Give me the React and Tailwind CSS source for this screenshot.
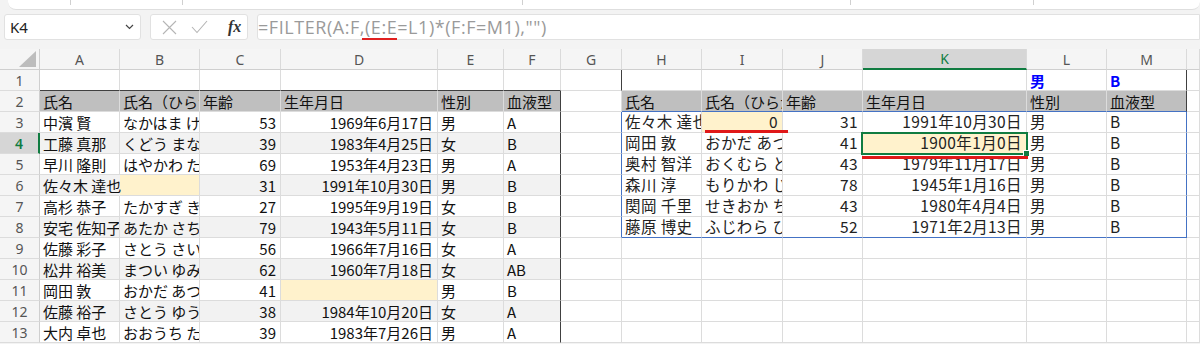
import React from 'react';

const LETTERS = ['A', 'B', 'C', 'D', 'E', 'F', 'G', 'H', 'I', 'J', 'K', 'L', 'M', ''];

const GRID = 'grid grid-cols-[40px_80px_80px_81px_157px_66px_57px_61px_80px_81px_80px_164px_80px_80px_13px]';

const JP = "font-['Noto_Sans_CJK_JP','Noto_Sans',sans-serif]";

// left table: A..F
const left = [
  ['中濱 賢', 'なかはま けん', '53', '1969年6月17日', '男', 'A'],
  ['工藤 真那', 'くどう まな', '39', '1983年4月25日', '女', 'B'],
  ['早川 隆則', 'はやかわ たかのり', '69', '1953年4月23日', '男', 'A'],
  ['佐々木 達也', '', '31', '1991年10月30日', '男', 'B'],
  ['高杉 恭子', 'たかすぎ きょうこ', '27', '1995年9月19日', '女', 'B'],
  ['安宅 佐知子', 'あたか さちこ', '79', '1943年5月11日', '女', 'B'],
  ['佐藤 彩子', 'さとう さいこ', '56', '1966年7月16日', '女', 'A'],
  ['松井 裕美', 'まつい ゆみ', '62', '1960年7月18日', '女', 'AB'],
  ['岡田 敦', 'おかだ あつし', '41', '', '男', 'B'],
  ['佐藤 裕子', 'さとう ゆうこ', '38', '1984年10月20日', '女', 'A'],
  ['大内 卓也', 'おおうち たくや', '39', '1983年7月26日', '男', 'A'],
];

// right table: H..M (filter result)
const right = [
  ['佐々木 達也', '0', '31', '1991年10月30日', '男', 'B'],
  ['岡田 敦', 'おかだ あつし', '41', '1900年1月0日', '男', 'B'],
  ['奥村 智洋', 'おくむら ともひろ', '43', '1979年11月17日', '男', 'B'],
  ['森川 淳', 'もりかわ じゅん', '78', '1945年1月16日', '男', 'B'],
  ['関岡 千里', 'せきおか ちさと', '43', '1980年4月4日', '男', 'B'],
  ['藤原 博史', 'ふじわら ひろし', '52', '1971年2月13日', '男', 'B'],
];

const heads = ['氏名', '氏名（ひらがな）', '年齢', '生年月日', '性別', '血液型'];

function buildRow(r) {
  // returns 14 cell specs for columns A..N
  const cells = Array.from({ length: 14 }, () => ({ t: '', align: 'l', bg: 'bg-white', br: 'border-r-[#dcdcdc]', bb: 'border-b-[#dcdcdc]' }));

  if (r === 1) {
    for (let c = 0; c < 6; c++) cells[c].bb = 'border-b-[#404040]';
    cells[6].br = 'border-r-[#404040]';
    cells[12].br = 'border-r-[#404040]';
    cells[11].t = '男';
    cells[11].blue = true;
    cells[12].t = 'B';
    cells[12].blue = true;
  }

  if (r === 2) {
    heads.forEach((h, i) => {
      cells[i].t = h;
      cells[i].bg = 'bg-[#bfbfbf]';
      cells[i + 7].t = h;
      cells[i + 7].bg = 'bg-[#bfbfbf]';
      cells[i + 7].bb = 'border-b-[#4472c4]';
    });
    cells[5].br = 'border-r-[#404040]';
    cells[12].br = 'border-r-[#404040]';
  }

  if (r >= 3) {
    const row = left[r - 3];
    const band = r % 2 === 0 ? 'bg-[#f2f2f2]' : 'bg-white';
    row.forEach((v, i) => {
      cells[i].t = v;
      cells[i].bg = band;
      cells[i].align = i === 2 || i === 3 ? 'r' : 'l';
    });
    cells[5].br = 'border-r-[#404040]';
  }

  if (r === 6) {
    cells[0].spill = true;
    cells[0].br = 'border-r-transparent';
    cells[1].bg = 'bg-[#fff2cc]';
  }
  if (r === 11) cells[3].bg = 'bg-[#fff2cc]';

  if (r >= 3 && r <= 8) {
    const row = right[r - 3];
    row.forEach((v, i) => {
      cells[i + 7].t = v;
      cells[i + 7].align = i === 2 || i === 3 ? 'r' : 'l';
      cells[i + 7].thin = true;
    });
    cells[6].br = 'border-r-[#4472c4]';
    cells[12].br = 'border-r-[#4472c4]';
    if (r === 8) for (let c = 7; c < 13; c++) cells[c].bb = 'border-b-[#4472c4]';
  }
  if (r === 3) {
    cells[8].align = 'r';
    cells[8].bg = 'bg-[#fff2cc]';
  }
  if (r === 4) cells[10].bg = 'bg-[#fff2cc]';

  return cells;
}

function Cell({ cell }) {
  return (
    <div
      className={`h-[21px] border-r border-b ${cell.br} ${cell.bb} ${cell.bg} flex items-center whitespace-nowrap px-[4px] ${
        cell.spill ? 'overflow-visible' : 'overflow-hidden'
      } ${cell.align === 'r' ? 'justify-end' : 'justify-start pl-[3px]'}`}
    >
      <span
        className={`${cell.spill ? 'relative z-10' : ''} ${
          cell.blue ? 'text-[#0000ff] font-bold' : 'text-[#111]'
        } ${cell.thin ? 'text-[15.5px] tracking-[0.4px] text-[#222]' : 'text-[15px]'} leading-none`}
      >
        {cell.t}
      </span>
    </div>
  );
}

function RowHeader({ n }) {
  const selected = n === 4;
  return (
    <div
      className={`h-[21px] border-b border-b-[#dcdcdc] flex items-center justify-center text-[14px] font-['Noto_Sans',sans-serif] ${
        selected
          ? 'bg-[#d6d6d6] text-[#107c41] font-semibold border-r-2 border-r-[#107c41]'
          : 'bg-[#f5f5f5] text-[#555] border-r border-r-[#cfcfcf]'
      }`}
    >
      {n}
    </div>
  );
}

function FormulaBar() {
  return (
    <div className="flex h-[26px] mt-[4px] gap-[9px] pl-[4px]">
      <div className="w-[137px] bg-white border border-[#e1e1e1] rounded-[3px] flex items-center justify-between pl-[5px] pr-[6px]">
        <span className="text-[15px] text-[#222] font-['Noto_Sans',sans-serif]">K4</span>
        <svg width="9" height="6" viewBox="0 0 9 6">
          <polyline points="1,1 4.5,4.5 8,1" fill="none" stroke="#444" strokeWidth="1.2" />
        </svg>
      </div>
      <div className="w-[98px] bg-white border border-[#e1e1e1] rounded-[3px] flex items-center pl-[11px]">
        <svg width="15" height="15" viewBox="0 0 15 15">
          <path d="M1 1 L14 14 M14 1 L1 14" stroke="#b5b5b5" strokeWidth="1.1" />
        </svg>
        <svg width="17" height="14" viewBox="0 0 17 14" className="ml-[14px]">
          <polyline points="1,7 6,12.5 16,1" fill="none" stroke="#b5b5b5" strokeWidth="1.1" />
        </svg>
        <span className="ml-[20px] text-[16px] italic font-bold text-[#333] font-['Liberation_Serif',serif]">fx</span>
      </div>
      <div className="flex-1 bg-white border border-[#e1e1e1] rounded-l-[3px] flex items-center pl-0">
        <span className="text-[18px] text-[#9a9a9a] font-['Open_Sans',sans-serif] tracking-[0.55px]">
          =FILTER(A:F
          <span className="relative">
            ,(E:E
            <span className="absolute left-[2px] right-0 -bottom-[1px] h-[2px] bg-[#e02020]" />
          </span>
          =L1)*(F:F=M1),"")
        </span>
      </div>
    </div>
  );
}

export default function App() {
  const rows = Array.from({ length: 13 }, (_, i) => i + 1);

  return (
    <div className={`w-[1200px] h-[344px] overflow-hidden bg-[#f3f3f3] ${JP}`}>
      {/* ribbon edge */}
      <div className="ml-[8px] h-[10px] bg-white rounded-b-[8px] border-b border-[#dedede] flex items-start">
        <div className="w-[63px] h-[5px] border-r border-[#d0d0d0]" />
        <div className="w-[112px] h-[5px] border-r border-[#d0d0d0]" />
        <div className="w-[340px] h-[5px] border-r border-[#d0d0d0]" />
        <div className="w-[328px] h-[5px] border-r border-[#d0d0d0]" />
        <div className="w-[183px] h-[5px] border-r border-[#d0d0d0]" />
      </div>

      <FormulaBar />

      <div className="relative mt-[9px]">
        <div className={GRID}>
          {/* column headers */}
          <div className="h-[21px] bg-[#f5f5f5] border-r border-b border-[#cfcfcf] flex items-end justify-end pr-[3px] pb-[2px]">
            <svg width="17" height="16" viewBox="0 0 17 16">
              <polygon points="17,0 17,16 0,16" fill="#bdbdbd" />
            </svg>
          </div>
          {LETTERS.map((l, i) => (
            <div
              key={i}
              className={`h-[21px] flex items-center justify-center text-[14px] font-['Noto_Sans',sans-serif] border-r border-r-[#dadada] ${
                l === 'K'
                  ? 'bg-[#d6d6d6] text-[#107c41] border-b-2 border-b-[#107c41]'
                  : 'bg-[#f5f5f5] text-[#555] border-b border-b-[#cfcfcf]'
              }`}
            >
              {l}
            </div>
          ))}

          {rows.map((r) => (
            <React.Fragment key={r}>
              <RowHeader n={r} />
              {buildRow(r).map((cell, i) => (
                <Cell key={i} cell={cell} />
              ))}
            </React.Fragment>
          ))}
        </div>

        {/* active cell K4 with fill handle */}
        <div className="absolute left-[861px] top-[83px] w-[167px] h-[23px] border-2 border-[#107c41] pointer-events-none" />
        <div className="absolute left-[1023px] top-[101px] w-[7px] h-[7px] bg-[#107c41] border border-white" />

        {/* red annotation marks */}
        <div className="absolute left-[705px] top-[81px] w-[83px] h-[3px] bg-[#e01818]" />
        <div className="absolute left-[862px] top-[107px] w-[166px] h-[3px] bg-[#e01818]" />
      </div>
    </div>
  );
}
